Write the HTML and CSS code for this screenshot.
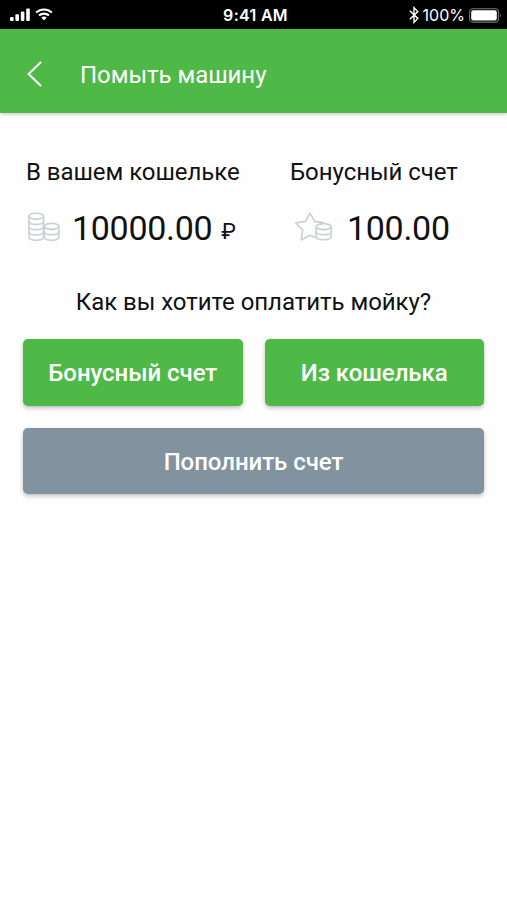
FILE: index.html
```html
<!DOCTYPE html>
<html lang="ru">
<head>
    <meta charset="utf-8">
    <title>Помыть машину</title>
    <link rel="stylesheet" href="styles.css">
</head>
<body>
    <div class="status">
        <div class="status-left">
            <svg width="44" height="16" viewBox="0 0 44 16">
                <g fill="#fff">
                    <rect x="0" y="10" width="3.6" height="4" rx="1"/>
                    <rect x="5.4" y="7.3" width="3.6" height="6.7" rx="1"/>
                    <rect x="10.8" y="4.6" width="3.6" height="9.4" rx="1"/>
                    <rect x="16.2" y="1.5" width="3.6" height="12.5" rx="1"/>
                    <path d="M31.3 10.6a4.3 4.3 0 0 1 5.4 0L34 13.6z"/>
                </g>
                <g fill="none" stroke="#fff" stroke-width="2.1">
                    <path d="M26.1 5.6a11.7 11.7 0 0 1 15.8 0"/>
                    <path d="M29 8.6a7.4 7.4 0 0 1 10 0"/>
                </g>
            </svg>
        </div>
        <div class="time">9:41 AM</div>
        <div class="status-right">
            <svg width="10" height="18" viewBox="0 0 10 18">
                <path d="M.8 4.8l8 7.6L5 16.4V1.6l3.8 4-8 7.6" fill="none" stroke="#fff" stroke-width="1.4"/>
            </svg>
            <span class="percent">100%</span>
            <svg width="33" height="15" viewBox="0 0 33 15">
                <rect x=".6" y=".7" width="28.8" height="13.4" rx="3.4" fill="none" stroke="#777" stroke-width="1.1"/>
                <rect x="2.2" y="2.3" width="25.6" height="10.2" rx="2" fill="#fff"/>
                <path d="M30.8 5.2q2 2.2 0 4.4z" fill="#777"/>
            </svg>
        </div>
    </div>
    <div class="header">
        <svg class="back" width="16" height="28" viewBox="0 0 16 28">
            <path d="M14 2L1.6 14 14 26" fill="none" stroke="#fff" stroke-width="2"/>
        </svg>
        <div class="title">Помыть машину</div>
    </div>
    <div class="content">
        <div class="accounts">
            <div class="wallet">
                <div class="label">В вашем кошельке</div>
                <div class="amount">
                    <svg width="32" height="30" viewBox="0 0 32 30">
                        <g fill="none" stroke="#c8d0d3" stroke-width="1.6">
                            <ellipse cx="8.3" cy="4.2" rx="7.3" ry="3"/>
                            <path d="M1 4.2v21c0 4 14.6 4 14.6 0v-21"/>
                            <path d="M1 9.4c0 4 14.6 4 14.6 0M1 14.7c0 4 14.6 4 14.6 0M1 20c0 4 14.6 4 14.6 0"/>
                            <ellipse cx="23.6" cy="14.4" rx="7.3" ry="3"/>
                            <path d="M16.3 14.4v10.8c0 4 14.6 4 14.6 0V14.4"/>
                            <path d="M16.3 19.8c0 4 14.6 4 14.6 0"/>
                        </g>
                    </svg>
                    <span class="sum">10000.00</span>
                    <span class="rub">₽</span>
                </div>
            </div>
            <div class="bonus">
                <div class="label">Бонусный счет</div>
                <div class="amount">
                    <svg width="38" height="30" viewBox="0 0 38 30">
                        <g fill="none" stroke="#c8d0d3" stroke-width="1.6" stroke-linejoin="round">
                            <path d="M20.5 25.4L15 23.2 6.2 28l1.5-10L.8 11l9.6-1.6L15 1.2l4.8 8.2 8.6 1.2-3.6 2"/>
                            <ellipse cx="28.6" cy="14.6" rx="7.4" ry="3"/>
                            <path d="M21.2 14.6v10.2c0 4 14.8 4 14.8 0V14.6"/>
                            <path d="M21.2 19.7c0 4 14.8 4 14.8 0"/>
                        </g>
                    </svg>
                    <span class="sum">100.00</span>
                </div>
            </div>
        </div>
        <div class="question">Как вы хотите оплатить мойку?</div>
        <div class="buttons">
            <button class="btn">Бонусный счет</button>
            <button class="btn">Из кошелька</button>
            <button class="btn refill">Пополнить счет</button>
        </div>
    </div>
</body>
</html>
```
FILE: styles.css
```css
* {
    box-sizing: border-box;
}
body {
    margin: 0;
    height: 900px;
    background-color: #fefefe;
    color: #111;
    font-family: Roboto, sans-serif;
    font-size: 24px;
    overflow: hidden;
}
svg {
    display: block;
    flex: none;
}
.status {
    display: grid;
    grid-template-columns: 1fr auto 1fr;
    align-items: center;
    height: 29px;
    padding: 1px 5px 0 10px;
    background-color: #000;
    color: #fff;
    font-family: Inter, sans-serif;
    font-size: 16px;
    line-height: 28px;
}
.time {
    margin-left: -1px;
    font-weight: 600;
    letter-spacing: 0.3px;
}
.status-right {
    display: flex;
    align-items: center;
    justify-content: flex-end;
}
.percent {
    margin: 0 4px 0 4px;
}
.header {
    display: flex;
    align-items: center;
    height: 84px;
    padding: 6px 27px 0;
    background-color: #4fb948;
    color: #fff;
    box-shadow: 0 1px 4px rgba(0, 0, 0, 0.25);
}
.title {
    margin-left: 37px;
    padding-top: 2px;
    letter-spacing: -0.05px;
}
.content {
    padding: 43px 23px 0;
}
.accounts {
    display: flex;
    white-space: nowrap;
}
.wallet {
    width: 264px;
    padding-left: 3px;
}
.bonus {
    padding-left: 3px;
}
.label {
    line-height: 32px;
    letter-spacing: -0.05px;
}
.amount {
    display: flex;
    align-items: center;
    height: 40px;
    margin-top: 19px;
}
.wallet .amount {
    padding-left: 2px;
}
.bonus .amount {
    padding-left: 5px;
}
.sum {
    margin-left: 12px;
    padding-top: 1px;
    font-size: 34px;
    line-height: 40px;
    letter-spacing: -0.3px;
}
.bonus .sum {
    margin-left: 14px;
}
.rub {
    margin: 8px 0 0 9px;
    font-size: 22px;
}
.question {
    margin-top: 39px;
    line-height: 32px;
    letter-spacing: -0.05px;
    text-align: center;
}
.buttons {
    display: grid;
    grid-template-columns: 1fr 1fr;
    gap: 23px 22px;
    margin-top: 21px;
}
.btn {
    height: 67px;
    padding: 0;
    border: none;
    border-radius: 5px;
    background-color: #4fb948;
    color: #fff;
    font-family: Roboto, sans-serif;
    font-size: 24px;
    font-weight: 500;
    letter-spacing: -0.05px;
    box-shadow: 0 2px 4px rgba(0, 0, 0, 0.25);
}
.refill {
    grid-column: span 2;
    height: 66px;
    margin-top: -1px;
    padding-top: 2px;
    background-color: #82929e;
}
```
